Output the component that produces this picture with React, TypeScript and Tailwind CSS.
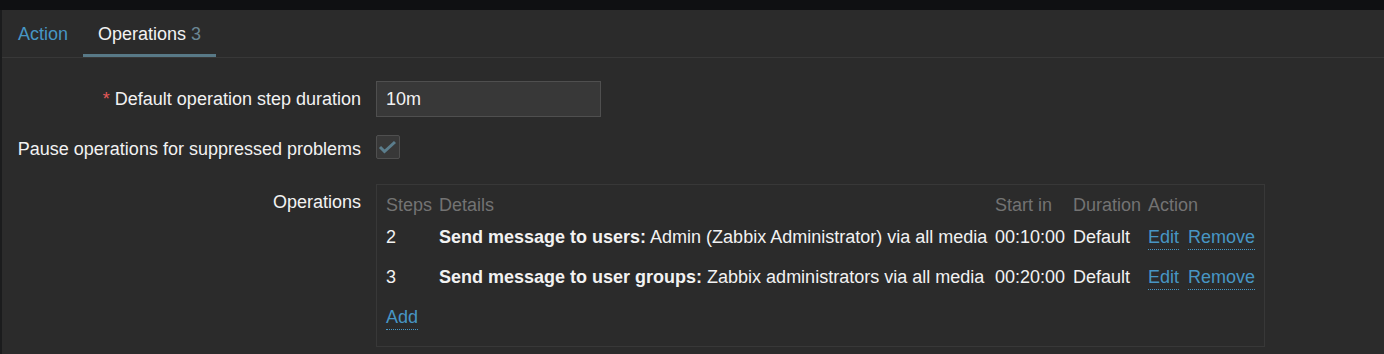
import React from "react";

const link =
  "inline-block leading-[18px] pb-[3px] border-b border-dotted border-[#4796c4] text-[#4796c4] cursor-pointer";

function Check() {
  return (
    <div className="w-[24px] h-[24px] rounded-[2px] border border-[#4f4f4f] bg-[#383838] flex items-center justify-center">
      <svg width="22" height="22" viewBox="0 0 22 22">
        <polyline
          points="3,11 7.5,15.5 18,6"
          fill="none"
          stroke="#5b7d8c"
          strokeWidth="3"
          strokeLinecap="butt"
          strokeLinejoin="miter"
        />
      </svg>
    </div>
  );
}

const rows = [
  {
    step: "2",
    bold: "Send message to users:",
    rest: " Admin (Zabbix Administrator) via all media",
    start: "00:10:00",
  },
  {
    step: "3",
    bold: "Send message to user groups:",
    rest: " Zabbix administrators via all media",
    start: "00:20:00",
  },
];

export default function App() {
  return (
    <div
      className="h-[354px] w-[1384px] flex flex-col bg-[#0f1012] text-[18px] text-[#f2f2f2] overflow-hidden"
      style={{ fontFamily: '"Liberation Sans", Arial, sans-serif' }}
    >
      <div className="h-[10px] shrink-0" />
      <div className="flex flex-1 min-h-0">
        <div className="w-[2px] bg-[#1b1c1d] shrink-0" />
        <div className="flex-1 bg-[#2b2b2b] flex flex-col">
          {/* Tabs */}
          <div className="flex h-[48px] border-b border-[#383838] pl-[1px] shrink-0">
            <div className="h-[47px] px-[15px] pt-[4px] flex items-center text-[#4796c4] leading-[22px] border-b-[3px] border-transparent">
              Action
            </div>
            <div className="h-[47px] px-[15px] pt-[4px] flex items-center leading-[22px] border-b-[3px] border-[#587987] text-[#f2f2f2]">
              Operations<span className="ml-[5px] text-[#6b8795]">3</span>
            </div>
          </div>

          {/* Form */}
          <div className="pt-[23px] flex flex-col">
            {/* Row 1 */}
            <div className="flex items-center gap-[15px]">
              <div className="w-[359px] text-right leading-[22px] whitespace-nowrap">
                <span className="text-[#e45959]">*</span> Default operation step duration
              </div>
              <div className="w-[225px] h-[36px] bg-[#383838] border border-[#4f4f4f] flex items-center pl-[9px] leading-[22px]">
                10m
              </div>
            </div>

            {/* Row 2 */}
            <div className="flex items-start gap-[15px] mt-[18px]">
              <div className="w-[359px] text-right leading-[22px] pt-[3px] whitespace-nowrap">
                Pause operations for suppressed problems
              </div>
              <Check />
            </div>

            {/* Row 3 */}
            <div className="flex items-start gap-[15px] mt-[24px]">
              <div className="w-[359px] text-right leading-[22px] pt-[7px] whitespace-nowrap">
                Operations
              </div>
              <div className="w-[889px] h-[163px] border border-[#383838] pl-[9px] pt-[8px]">
                <div className="grid grid-cols-[53px_556px_78px_75px_1fr] leading-[18px] whitespace-nowrap">
                  <div className="h-[24px] pt-[3px] text-[#737373]">Steps</div>
                  <div className="h-[24px] pt-[3px] text-[#737373]">Details</div>
                  <div className="h-[24px] pt-[3px] text-[#737373]">Start in</div>
                  <div className="h-[24px] pt-[3px] text-[#737373]">Duration</div>
                  <div className="h-[24px] pt-[3px] text-[#737373]">Action</div>
                  {rows.map((r) => (
                    <React.Fragment key={r.step}>
                      <div className="h-[40px] pt-[11px]">{r.step}</div>
                      <div className="h-[40px] pt-[11px]">
                        <span className="font-bold">{r.bold}</span>
                        {r.rest}
                      </div>
                      <div className="h-[40px] pt-[11px]">{r.start}</div>
                      <div className="h-[40px] pt-[11px]">Default</div>
                      <div className="h-[40px] pt-[11px] flex items-start gap-[9px]">
                        <span className={link}>Edit</span>
                        <span className={link}>Remove</span>
                      </div>
                    </React.Fragment>
                  ))}
                  <div className="h-[40px] pt-[11px] col-span-5">
                    <span className={link}>Add</span>
                  </div>
                </div>
              </div>
            </div>
          </div>
        </div>
      </div>
    </div>
  );
}
